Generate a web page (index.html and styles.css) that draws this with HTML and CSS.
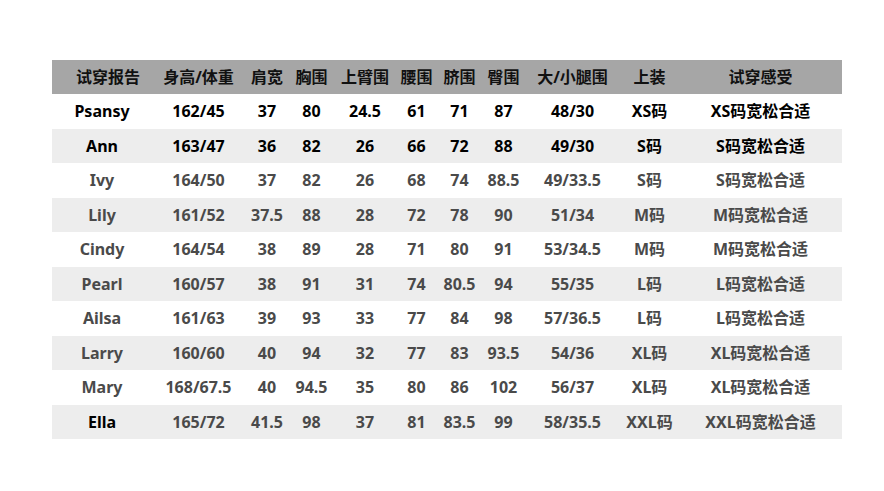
FILE: index.html
```html
<!DOCTYPE html>
<html lang="zh">
<head>
<meta charset="utf-8">
<link rel="stylesheet" href="styles.css">
</head>
<body>
<div class="page">
  <div class="table">
    <div class="row head">
      <div class="c first">试穿报告</div><div class="c">身高/体重</div><div class="c">肩宽</div><div class="c">胸围</div><div class="c">上臂围</div><div class="c">腰围</div><div class="c">脐围</div><div class="c">臀围</div><div class="c">大/小腿围</div><div class="c">上装</div><div class="c">试穿感受</div>
    </div>
    <div class="row dark">
      <div class="c">Psansy</div><div class="c">162/45</div><div class="c">37</div><div class="c">80</div><div class="c">24.5</div><div class="c">61</div><div class="c">71</div><div class="c">87</div><div class="c">48/30</div><div class="c">XS码</div><div class="c">XS码宽松合适</div>
    </div>
    <div class="row alt dark">
      <div class="c">Ann</div><div class="c">163/47</div><div class="c">36</div><div class="c">82</div><div class="c">26</div><div class="c">66</div><div class="c">72</div><div class="c">88</div><div class="c">49/30</div><div class="c">S码</div><div class="c">S码宽松合适</div>
    </div>
    <div class="row">
      <div class="c">Ivy</div><div class="c">164/50</div><div class="c">37</div><div class="c">82</div><div class="c">26</div><div class="c">68</div><div class="c">74</div><div class="c">88.5</div><div class="c">49/33.5</div><div class="c">S码</div><div class="c">S码宽松合适</div>
    </div>
    <div class="row alt">
      <div class="c">Lily</div><div class="c">161/52</div><div class="c">37.5</div><div class="c">88</div><div class="c">28</div><div class="c">72</div><div class="c">78</div><div class="c">90</div><div class="c">51/34</div><div class="c">M码</div><div class="c">M码宽松合适</div>
    </div>
    <div class="row">
      <div class="c">Cindy</div><div class="c">164/54</div><div class="c">38</div><div class="c">89</div><div class="c">28</div><div class="c">71</div><div class="c">80</div><div class="c">91</div><div class="c">53/34.5</div><div class="c">M码</div><div class="c">M码宽松合适</div>
    </div>
    <div class="row alt">
      <div class="c">Pearl</div><div class="c">160/57</div><div class="c">38</div><div class="c">91</div><div class="c">31</div><div class="c">74</div><div class="c">80.5</div><div class="c">94</div><div class="c">55/35</div><div class="c">L码</div><div class="c">L码宽松合适</div>
    </div>
    <div class="row">
      <div class="c">Ailsa</div><div class="c">161/63</div><div class="c">39</div><div class="c">93</div><div class="c">33</div><div class="c">77</div><div class="c">84</div><div class="c">98</div><div class="c">57/36.5</div><div class="c">L码</div><div class="c">L码宽松合适</div>
    </div>
    <div class="row alt">
      <div class="c">Larry</div><div class="c">160/60</div><div class="c">40</div><div class="c">94</div><div class="c">32</div><div class="c">77</div><div class="c">83</div><div class="c">93.5</div><div class="c">54/36</div><div class="c">XL码</div><div class="c">XL码宽松合适</div>
    </div>
    <div class="row">
      <div class="c">Mary</div><div class="c">168/67.5</div><div class="c">40</div><div class="c">94.5</div><div class="c">35</div><div class="c">80</div><div class="c">86</div><div class="c">102</div><div class="c">56/37</div><div class="c">XL码</div><div class="c">XL码宽松合适</div>
    </div>
    <div class="row alt">
      <div class="c name-dark">Ella</div><div class="c">165/72</div><div class="c">41.5</div><div class="c">98</div><div class="c">37</div><div class="c">81</div><div class="c">83.5</div><div class="c">99</div><div class="c">58/35.5</div><div class="c">XXL码</div><div class="c">XXL码宽松合适</div>
    </div>
  </div>
</div>
</body>
</html>
```

FILE: styles.css
```css
html, body {
  margin: 0;
  padding: 0;
  background: #ffffff;
}

.page {
  padding: 60px 0 0 52px;
}

.table {
  width: 790px;
  font-family: "Noto Sans", "Noto Sans CJK SC", sans-serif;
  font-weight: 700;
  font-size: 16px;
  color: #4a4a4a;
}

.row {
  display: grid;
  grid-template-columns: 100px 93px 44px 45px 62px 41px 45px 43px 95px 59px 163px;
  height: 34.5px;
  align-items: center;
}

.row.head {
  height: 34px;
  background: #a6a6a6;
  color: #111111;
}

.row.alt {
  background: #ededed;
}

.row.dark {
  color: #000000;
}

.c {
  text-align: center;
  white-space: nowrap;
  line-height: 20px;
}

.head .first {
  padding-left: 12px;
}

.name-dark {
  color: #000000;
}
```
